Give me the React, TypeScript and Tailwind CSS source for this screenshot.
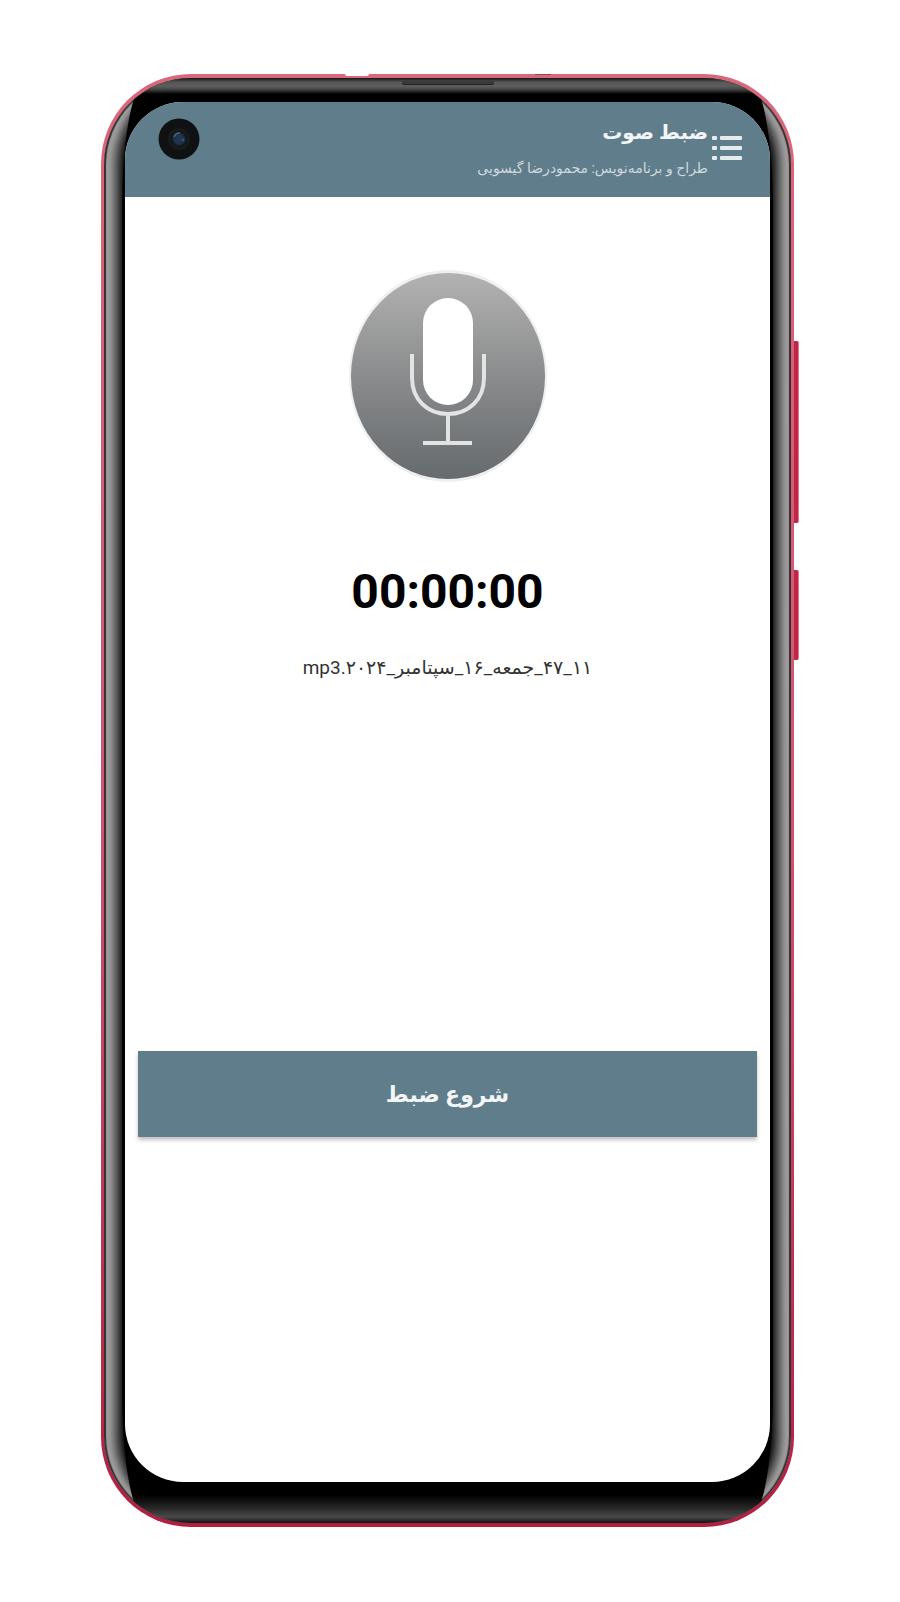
import { useState } from "react";

const FA = "font-['Roboto','DejaVu_Sans',sans-serif]";

export default function App() {
  return (
    <main className="bg-white pl-[101px] pr-[106px] pt-[74px] pb-[75px]">
      <PhoneFrame>
        <Header />
        <Recorder />
      </PhoneFrame>
    </main>
  );
}

function PhoneFrame({ children }: { children: React.ReactNode }) {
  return (
    <div className="relative max-w-[720px] mx-auto">
      {/* side keys */}
      <div className="absolute -right-[5px] top-[267px] w-[6px] h-[182px] rounded-r-xs bg-[#c22647] border-r border-[#e8748c]"></div>
      <div className="absolute -right-[5px] top-[496px] w-[6px] h-[90px] rounded-r-xs bg-[#c22647] border-r border-[#e8748c]"></div>

      <div className="relative rounded-[90px] px-[3px] pt-1 pb-1 bg-linear-to-b from-[#d8687a] via-[#cf5573] to-[#b01f3f]">
        <div className="absolute left-[244px] top-0 w-6 h-[2px] rounded-b-full bg-white"></div>
        <div className="absolute left-[434px] top-0 w-4 h-px bg-[#8d4560]"></div>

        <div className="relative rounded-[87px] overflow-hidden bg-black shadow-[inset_2px_0_1px_#3a2a30,inset_-2px_0_1px_#3a2a30,inset_7px_0_4px_#9e9e9e,inset_-7px_0_4px_#9e9e9e,inset_15px_0_10px_#808080,inset_-15px_0_10px_#808080]">
          <div className="absolute inset-y-0 inset-x-[18px] rounded-[26px/130px] bg-[linear-gradient(to_bottom,#161616_0,#555_4px,#5e5e5e_8px,#4a4a4a_11px,#000_16px,#000_calc(100%-28px),#2a2a2a_calc(100%-14px),#4a4a4a_calc(100%-6px),#111_100%)]"></div>
          <div className="absolute top-[3px] left-1/2 -translate-x-1/2 w-[92px] h-1 rounded-b-xs bg-[#3a3a3c] border-b border-[#222]"></div>

          <div className="relative mx-[21px] mt-6 mb-[41px] min-h-[1380px] rounded-[58px] overflow-hidden bg-white flex flex-col">
            {children}
          </div>
        </div>
      </div>
    </div>
  );
}

function Header() {
  return (
    <header
      dir="rtl"
      className={`relative h-[95px] bg-[#607d8b] text-[#f3f6f7] pr-7 flex items-center gap-1 ${FA}`}
    >
      <button aria-label="منو" className="shrink-0 w-[30px] mb-1">
        <MenuIcon />
      </button>
      <div className="flex flex-col gap-2 mb-1">
        <h1 className="text-xl leading-8 font-bold">ضبط صوت</h1>
        <p className="text-sm leading-6 text-[#cfd8dc]">
          طراح و برنامه‌نویس: محمودرضا گیسویی
        </p>
      </div>
      <Camera />
    </header>
  );
}

function Recorder() {
  const [recording, setRecording] = useState(false);

  return (
    <section dir="rtl" className={`flex flex-col items-center px-[13px] ${FA}`}>
      <MicIcon />
      <time className="mt-[77px] text-5xl leading-[64px] font-bold text-black">
        00:00:00
      </time>
      <p className="mt-7 text-[19px] leading-8 text-[#333]">
        ۱۱_۴۷_جمعه_۱۶_سپتامبر_۲۰۲۴.mp3
      </p>
      <button
        onClick={() => setRecording(!recording)}
        className="mt-[367px] w-full h-[86px] bg-[#607d8b] text-[#f3f6f7] text-[22px] font-bold shadow-[0_3px_4px_rgba(0,0,0,0.25)]"
      >
        {recording ? "پایان ضبط" : "شروع ضبط"}
      </button>
    </section>
  );
}

function Camera() {
  return (
    <svg
      viewBox="0 0 42 42"
      className="absolute left-[33px] top-4 w-[42px] h-[42px]"
    >
      <defs>
        <radialGradient id="lens">
          <stop offset="0" stopColor="#2a3656" />
          <stop offset="0.6" stopColor="#1d3348" />
          <stop offset="1" stopColor="#0d1114" />
        </radialGradient>
      </defs>
      <circle cx="21" cy="21" r="20.5" fill="#101112" />
      <circle cx="21" cy="21" r="11" fill="#1a1a1b" />
      <circle cx="21" cy="21" r="8" fill="url(#lens)" />
      <path d="M16 19a6 6 0 0 1 6-4" stroke="#3d6a86" strokeWidth="1.5" fill="none" />
      <circle cx="25" cy="22" r="1.5" fill="#24587a" />
    </svg>
  );
}

function MenuIcon() {
  return (
    <svg viewBox="0 0 30 26" className="w-[30px] h-[26px]" fill="#e6ebee">
      <rect x="0" y="1" width="5" height="4" rx="1" />
      <rect x="8" y="1" width="22" height="4" rx="1" />
      <rect x="0" y="11" width="5" height="4" rx="1" />
      <rect x="8" y="11" width="22" height="4" rx="1" />
      <rect x="0" y="21" width="5" height="4" rx="1" />
      <rect x="8" y="21" width="22" height="4" rx="1" />
    </svg>
  );
}

function MicIcon() {
  return (
    <svg viewBox="0 0 200 214" className="mt-[72px] w-[200px] h-[214px]">
      <defs>
        <linearGradient id="mic" x1="0" y1="0" x2="0" y2="1">
          <stop offset="0" stopColor="#b2b2b2" />
          <stop offset="0.5" stopColor="#8a8b8c" />
          <stop offset="1" stopColor="#666b6e" />
        </linearGradient>
      </defs>
      <ellipse cx="100" cy="107" rx="99" ry="106" fill="#efefef" />
      <ellipse cx="100" cy="107" rx="97" ry="103" fill="url(#mic)" />
      <rect x="75" y="29" width="50" height="107" rx="25" fill="#fff" />
      <path
        d="M64 85v24c0 22 16 36 36 36s36-14 36-36V85M100 145v29M75 174h49"
        fill="none"
        stroke="#e2e3e3"
        strokeWidth="4"
      />
    </svg>
  );
}
